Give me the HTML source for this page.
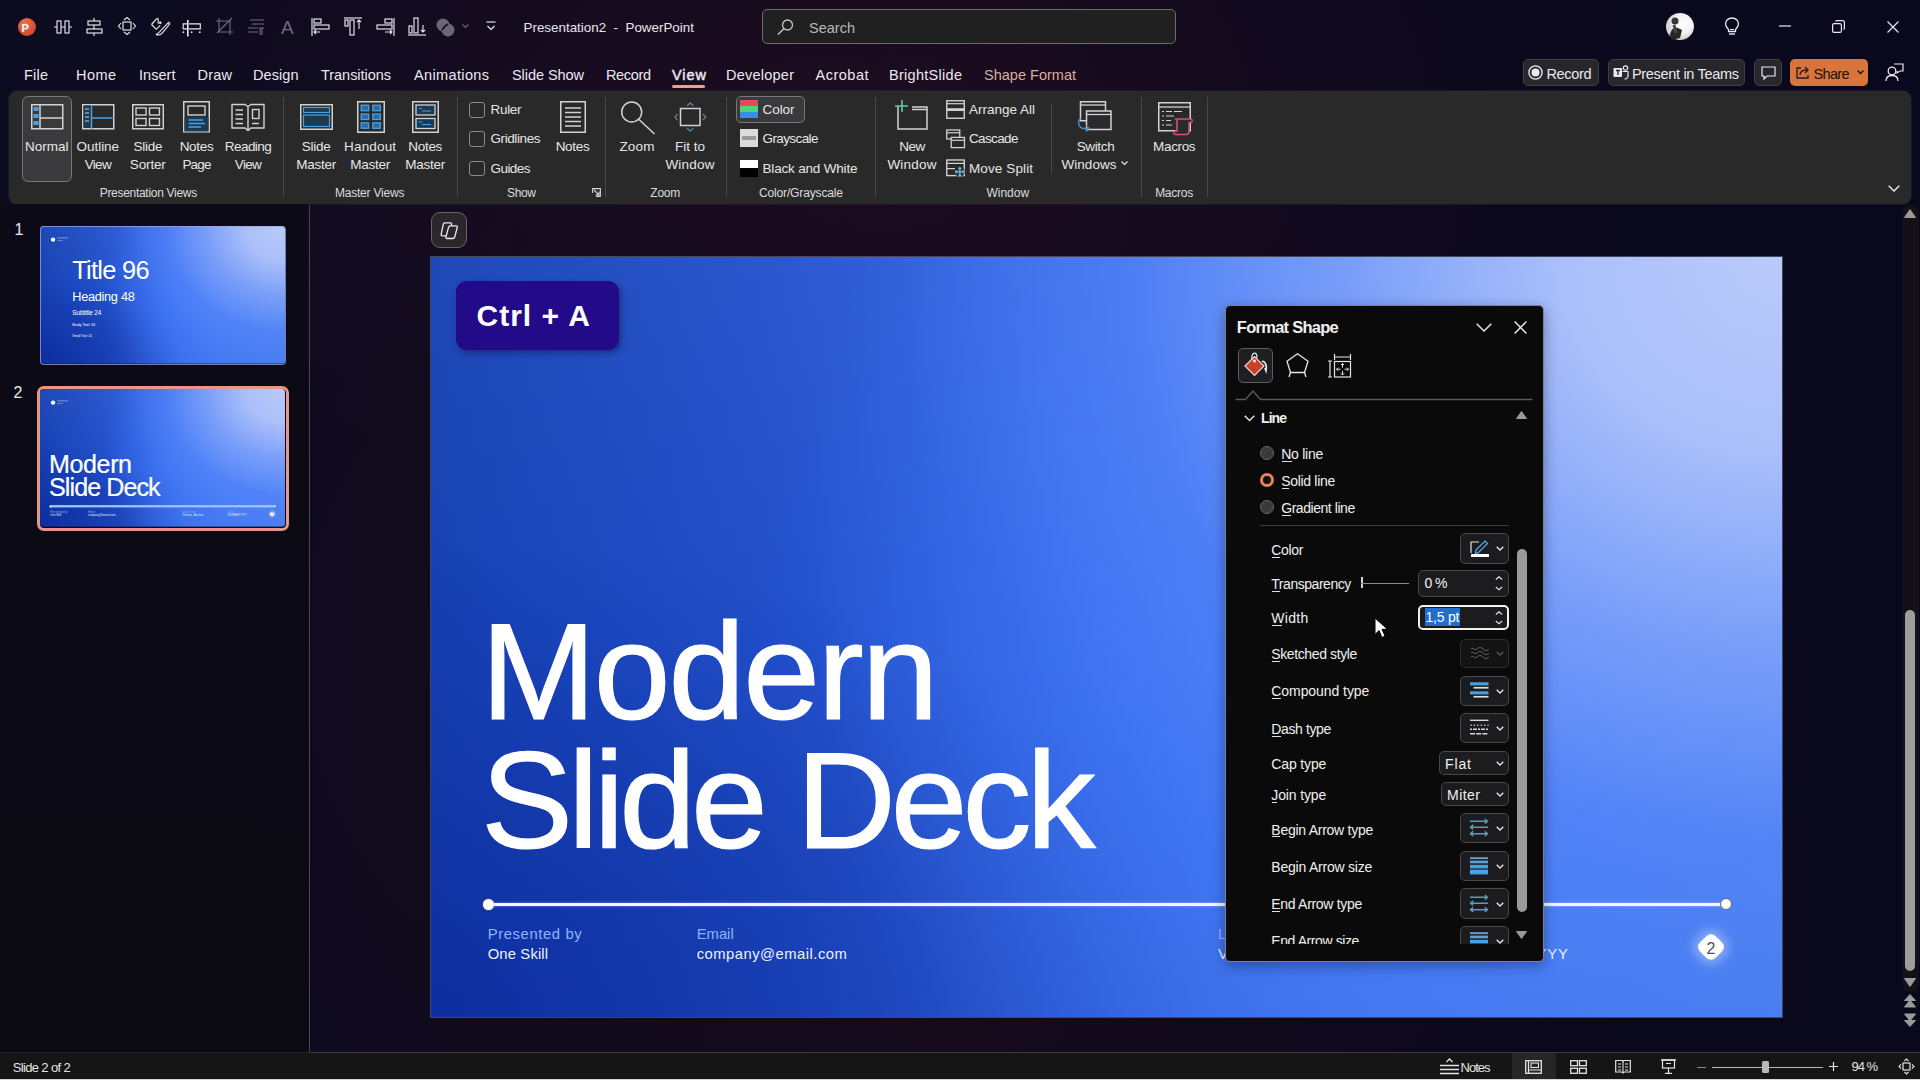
<!DOCTYPE html>
<html><head><meta charset="utf-8">
<style>
html,body{margin:0;padding:0;width:1920px;height:1080px;overflow:hidden;background:#0c0a18;font-family:"Liberation Sans",sans-serif;}
.t{position:absolute;white-space:nowrap;line-height:1;font-family:"Liberation Sans",sans-serif;}
svg{overflow:visible}
</style></head><body>
<div style="position:absolute;left:0;top:0;width:1920px;height:1080px;background:radial-gradient(ellipse 700px 420px at 820px 120px, rgba(40,14,38,0.45), rgba(40,14,38,0) 100%),radial-gradient(ellipse 900px 700px at 900px 650px, rgba(30,14,30,0.4), rgba(30,14,30,0) 100%),linear-gradient(90deg,#0c0b20 0%,#0f0a1c 30%,#120a1a 50%,#0c081c 70%,#09081c 100%);"></div><div style="position:absolute;left:18px;top:18px;width:18px;height:18px;border-radius:50%;background:radial-gradient(circle at 35% 30%,#f07050,#c83a20);"></div><div class="t" style="left:21.50px;top:22.69px;font-size:11px;color:#fff;font-weight:700;">P</div><svg style="position:absolute;left:54px;top:17px;" width="20" height="20" viewBox="0 0 20 20" fill="none"><rect x="3" y="4" width="4" height="12" stroke="#ece8f0" stroke-width="1.15"/><rect x="11" y="4" width="4" height="12" stroke="#ece8f0" stroke-width="1.15"/><path d="M0 10H3M7 10H11M15 10H18" stroke="#ece8f0" stroke-width="1.15"/></svg><svg style="position:absolute;left:86px;top:17px;" width="20" height="20" viewBox="0 0 20 20" fill="none"><rect x="2" y="4" width="12" height="4" stroke="#ece8f0" stroke-width="1.15"/><rect x="1" y="12" width="15" height="4" stroke="#ece8f0" stroke-width="1.15"/><path d="M8 1V4M8 8V12M8 16V19" stroke="#ece8f0" stroke-width="1.15"/></svg><svg style="position:absolute;left:118px;top:17px;" width="20" height="20" viewBox="0 0 20 20" fill="none"><rect x="5" y="5" width="8" height="8" stroke="#ece8f0" stroke-width="1.15"/><path d="M6 3L9 0.5L12 3M6 15L9 17.5L12 15M3 6L0.5 9L3 12M15 6L17.5 9L15 12" stroke="#ece8f0" stroke-width="1.1"/></svg><svg style="position:absolute;left:150px;top:17px;" width="20" height="20" viewBox="0 0 20 20" fill="none"><path d="M1.5 7.5L6.5 1.8C7.2 1.1 8.2 1.6 8.2 2.6V6.8M1.5 7.5L6.3 12.3L10.3 8.3" stroke="#ece8f0" stroke-width="1.15"/><circle cx="10.3" cy="5.8" r="1.3" fill="#ece8f0"/><path d="M18.8 5.2L10.3 14.2C9.4 15.1 8.2 16.6 6.2 17.6C8.6 18.3 11.2 17.4 12.4 15.8L19.8 6.9Z" stroke="#ece8f0" stroke-width="1.1" stroke-linejoin="round"/></svg><svg style="position:absolute;left:181px;top:17px;" width="20" height="20" viewBox="0 0 20 20" fill="none"><path d="M6.8 3V19.5" stroke="#ece8f0" stroke-width="1.6"/><path d="M6 6.8H2.2V11.8H6M8 6.8H19.3V11.8H8" stroke="#ece8f0" stroke-width="1.15"/><circle cx="2.4" cy="15.2" r="0.9" fill="#ece8f0"/><circle cx="10.6" cy="15.2" r="0.9" fill="#ece8f0"/><circle cx="18.8" cy="15.2" r="0.9" fill="#ece8f0"/></svg><svg style="position:absolute;left:215px;top:17px;" width="20" height="20" viewBox="0 0 20 20" fill="none"><path d="M4 1V15H18M1 4H15V18M2 16L17 1" stroke="#6f6b7a" stroke-width="1.15"/></svg><svg style="position:absolute;left:246px;top:17px;" width="20" height="20" viewBox="0 0 20 20" fill="none"><path d="M4 3H18M6 7H18M2 11H12M2 15H12M14 11V18M16 11V18M13 11H18" stroke="#6f6b7a" stroke-width="1.15"/></svg><div class="t" style="left:281.00px;top:17.92px;font-size:19px;color:#6f6b7a;">A</div><svg style="position:absolute;left:311px;top:17px;" width="20" height="20" viewBox="0 0 20 20" fill="none"><path d="M1 1V19" stroke="#ece8f0" stroke-width="1.15"/><rect x="3" y="2" width="7" height="4" stroke="#ece8f0" stroke-width="1.15"/><rect x="3" y="8" width="15" height="4" stroke="#ece8f0" stroke-width="1.15"/><path d="M9 15H3M5 13L3 15L5 17" stroke="#ece8f0" stroke-width="1.1"/></svg><svg style="position:absolute;left:344px;top:17px;" width="20" height="20" viewBox="0 0 20 20" fill="none"><path d="M0 1H18" stroke="#ece8f0" stroke-width="1.15"/><rect x="1" y="3" width="3" height="6" stroke="#ece8f0" stroke-width="1.15"/><rect x="6" y="3" width="4" height="15" stroke="#ece8f0" stroke-width="1.15"/><path d="M15 12V3M13 5L15 3L17 5" stroke="#ece8f0" stroke-width="1.1"/></svg><svg style="position:absolute;left:376px;top:17px;" width="20" height="20" viewBox="0 0 20 20" fill="none"><path d="M18 1V19" stroke="#ece8f0" stroke-width="1.15"/><rect x="9" y="2" width="7" height="4" stroke="#ece8f0" stroke-width="1.15"/><rect x="1" y="8" width="15" height="4" stroke="#ece8f0" stroke-width="1.15"/><path d="M9 15H16M14 13L16 15L14 17" stroke="#ece8f0" stroke-width="1.1"/></svg><svg style="position:absolute;left:408px;top:17px;" width="20" height="20" viewBox="0 0 20 20" fill="none"><path d="M0 18H18" stroke="#ece8f0" stroke-width="1.15"/><rect x="1" y="9" width="3" height="7" stroke="#ece8f0" stroke-width="1.15"/><rect x="6" y="1" width="4" height="15" stroke="#ece8f0" stroke-width="1.15"/><path d="M15 8V15M13 13L15 15L17 13" stroke="#ece8f0" stroke-width="1.1"/></svg><svg style="position:absolute;left:436px;top:18px;" width="19" height="19" viewBox="0 0 19 19" fill="none"><circle cx="7" cy="7" r="6.5" fill="#6a6674"/><circle cx="12" cy="12" r="6.5" fill="#6a6674"/><path d="M6 12C8 9 10 7 12 6" stroke="#0e0b1c" stroke-width="1.5"/></svg><svg style="position:absolute;left:462px;top:24px;" width="7" height="5" viewBox="0 0 7 5" fill="none"><path d="M0.5 0.5L3.5 3.5L6.5 0.5" stroke="#6a6674" stroke-width="1.1"/></svg><svg style="position:absolute;left:486px;top:21px;" width="10" height="11" viewBox="0 0 10 11" fill="none"><path d="M0.5 1H9.5" stroke="#ece8f0" stroke-width="1.15"/><path d="M1.5 5L5 8.5L8.5 5" stroke="#ece8f0" stroke-width="1.15"/></svg><div class="t" style="left:523.50px;top:21.16px;font-size:13.4px;color:#e9e5ee;">Presentation2&nbsp;&nbsp;-&nbsp;&nbsp;PowerPoint</div><div style="position:absolute;left:762px;top:9px;width:414px;height:35px;border:1px solid #6b6b70;border-radius:5px;background:#202020;box-sizing:border-box;"></div><svg style="position:absolute;left:777px;top:19px;" width="17" height="17" viewBox="0 0 17 17" fill="none"><circle cx="10.5" cy="6" r="5" stroke="#c8c5cc" stroke-width="1.3"/><path d="M7 9.5L1 15.5" stroke="#c8c5cc" stroke-width="1.4"/></svg><div class="t" style="left:809.00px;top:20.73px;font-size:14.5px;color:#b9b6bd;">Search</div><div style="position:absolute;left:1666px;top:13px;width:28px;height:27px;border-radius:50%;background:radial-gradient(circle at 60% 40%,#ffffff 0%,#f4f2f4 40%,#d8d6d8 60%);overflow:hidden"></div><svg style="position:absolute;left:1666px;top:13px;" width="28" height="27" viewBox="0 0 28 27" fill="none"><path d="M4 22C5 16 8 14 12 15L16 17L14 25L6 27Z" fill="#2a2628"/><circle cx="9" cy="8" r="3.5" fill="#3a3436"/><path d="M8 12L10 20" stroke="#444" stroke-width="3"/></svg><svg style="position:absolute;left:1724px;top:17px;" width="16" height="20" viewBox="0 0 16 20" fill="none"><path d="M8 1C4 1 1.5 3.8 1.5 7C1.5 9.5 3 11 4.5 12.5V14.5H11.5V12.5C13 11 14.5 9.5 14.5 7C14.5 3.8 12 1 8 1Z" stroke="#ece8f0" stroke-width="1.3"/><path d="M5 17H11" stroke="#ece8f0" stroke-width="1.4"/><path d="M6 12.5H10" stroke="#ece8f0" stroke-width="1"/></svg><svg style="position:absolute;left:1779px;top:25px;" width="12" height="2" viewBox="0 0 12 2" fill="none"><path d="M0 1H12" stroke="#ece8f0" stroke-width="1.2"/></svg><svg style="position:absolute;left:1832px;top:20px;" width="13" height="13" viewBox="0 0 13 13" fill="none"><rect x="0.6" y="3.6" width="8.8" height="8.8" rx="1.5" stroke="#ece8f0" stroke-width="1.2"/><path d="M3.5 1.6C3.8 0.9 4.4 0.6 5 0.6H10.5C11.6 0.6 12.4 1.4 12.4 2.5V8C12.4 8.6 12.1 9.2 11.4 9.5" stroke="#ece8f0" stroke-width="1.2"/></svg><svg style="position:absolute;left:1887px;top:21px;" width="12" height="12" viewBox="0 0 12 12" fill="none"><path d="M0.5 0.5L11.5 11.5M11.5 0.5L0.5 11.5" stroke="#ece8f0" stroke-width="1.2"/></svg><div class="t" style="left:24.00px;top:67.73px;font-size:14.5px;color:#ece8f0;letter-spacing:0.212px;">File</div><div class="t" style="left:76.00px;top:67.73px;font-size:14.5px;color:#ece8f0;letter-spacing:0.441px;">Home</div><div class="t" style="left:139.00px;top:67.73px;font-size:14.5px;color:#ece8f0;letter-spacing:0.048px;">Insert</div><div class="t" style="left:197.50px;top:67.73px;font-size:14.5px;color:#ece8f0;letter-spacing:0.222px;">Draw</div><div class="t" style="left:253.00px;top:67.73px;font-size:14.5px;color:#ece8f0;letter-spacing:0.073px;">Design</div><div class="t" style="left:321.00px;top:67.73px;font-size:14.5px;color:#ece8f0;letter-spacing:-0.037px;">Transitions</div><div class="t" style="left:414.00px;top:67.73px;font-size:14.5px;color:#ece8f0;letter-spacing:0.364px;">Animations</div><div class="t" style="left:512.00px;top:67.73px;font-size:14.5px;color:#ece8f0;letter-spacing:-0.06px;">Slide Show</div><div class="t" style="left:606.00px;top:67.73px;font-size:14.5px;color:#ece8f0;letter-spacing:-0.348px;">Record</div><div class="t" style="left:672.00px;top:67.73px;font-size:14.5px;color:#ece8f0;letter-spacing:0.945px;-webkit-text-stroke:0.45px #ece8f0;">View</div><div class="t" style="left:726.00px;top:67.73px;font-size:14.5px;color:#ece8f0;letter-spacing:0.239px;">Developer</div><div class="t" style="left:815.50px;top:67.73px;font-size:14.5px;color:#ece8f0;letter-spacing:0.505px;">Acrobat</div><div class="t" style="left:889.00px;top:67.73px;font-size:14.5px;color:#ece8f0;letter-spacing:0.288px;">BrightSlide</div><div class="t" style="left:984.00px;top:67.73px;font-size:14.5px;color:#d8ada2;letter-spacing:0.012px;">Shape Format</div><div style="position:absolute;left:672px;top:85px;width:33px;height:3px;background:#e5a48e;border-radius:2px;"></div><div style="position:absolute;left:1523px;top:59px;width:76px;height:27px;background:#27262b;border:1px solid #3e3d44;border-radius:5px;box-sizing:border-box;"></div><svg style="position:absolute;left:1528px;top:65px;" width="15" height="15" viewBox="0 0 15 15" fill="none"><circle cx="7.5" cy="7.5" r="6.6" stroke="#ece8f0" stroke-width="1.3"/><circle cx="7.5" cy="7.5" r="4" fill="#ece8f0"/></svg><div class="t" style="left:1546.50px;top:66.73px;font-size:14.5px;color:#ece8f0;letter-spacing:-0.348px;">Record</div><div style="position:absolute;left:1608px;top:59px;width:137px;height:27px;background:#27262b;border:1px solid #3e3d44;border-radius:5px;box-sizing:border-box;"></div><svg style="position:absolute;left:1613px;top:65px;" width="16" height="15" viewBox="0 0 16 15" fill="none"><rect x="0.5" y="3" width="8.5" height="9" rx="1" fill="#ece8f0"/><path d="M3 5.5H7M5 5.5V10" stroke="#27262b" stroke-width="1.3"/><circle cx="12.5" cy="3" r="2.2" stroke="#ece8f0" stroke-width="1.2"/><path d="M9.5 6.5H15V11C15 13 13 14 11.5 14" stroke="#ece8f0" stroke-width="1.2"/></svg><div class="t" style="left:1632.00px;top:66.73px;font-size:14.5px;color:#ece8f0;letter-spacing:-0.317px;">Present in Teams</div><div style="position:absolute;left:1754px;top:59px;width:28px;height:27px;background:#27262b;border:1px solid #3e3d44;border-radius:5px;box-sizing:border-box;"></div><svg style="position:absolute;left:1761px;top:66px;" width="15" height="14" viewBox="0 0 15 14" fill="none"><path d="M1 1H14V10H6L3 13V10H1Z" stroke="#ece8f0" stroke-width="1.2"/></svg><div style="position:absolute;left:1790px;top:59px;width:78px;height:27px;background:#d8743c;border-radius:5px;"></div><svg style="position:absolute;left:1795px;top:65px;" width="15" height="15" viewBox="0 0 15 15" fill="none"><path d="M6 3H2V13H13V10" stroke="#2a1a14" stroke-width="1.3"/><path d="M5 10C5 6 8 5 12 5M10 2L13 5L10 8" stroke="#2a1a14" stroke-width="1.3"/></svg><div class="t" style="left:1813.50px;top:66.73px;font-size:14.5px;color:#1c120e;letter-spacing:-0.673px;">Share</div><svg style="position:absolute;left:1857px;top:70px;" width="7" height="5" viewBox="0 0 7 5" fill="none"><path d="M0.5 0.5L3.5 3.5L6.5 0.5" stroke="#1c120e" stroke-width="1.3"/></svg><svg style="position:absolute;left:1885px;top:63px;" width="19" height="19" viewBox="0 0 19 19" fill="none"><circle cx="7" cy="8" r="3.8" stroke="#ece8f0" stroke-width="1.3"/><path d="M1 18C1 14 3.5 12.5 7 12.5C10.5 12.5 13 14 13 18" stroke="#ece8f0" stroke-width="1.3"/><path d="M9 1H18V8H15L12 10V8" stroke="#ece8f0" stroke-width="1.2"/></svg><div style="position:absolute;left:9px;top:91px;width:1902px;height:113px;background:#292929;border-radius:8px;box-shadow:0 0 0 1px rgba(60,60,70,0.25);"></div><div style="position:absolute;left:283px;top:97px;width:1px;height:100px;background:#474747;"></div><div style="position:absolute;left:457px;top:97px;width:1px;height:100px;background:#474747;"></div><div style="position:absolute;left:605px;top:97px;width:1px;height:100px;background:#474747;"></div><div style="position:absolute;left:726px;top:97px;width:1px;height:100px;background:#474747;"></div><div style="position:absolute;left:875px;top:97px;width:1px;height:100px;background:#474747;"></div><div style="position:absolute;left:1141px;top:97px;width:1px;height:100px;background:#474747;"></div><div style="position:absolute;left:1207px;top:97px;width:1px;height:100px;background:#474747;"></div><div style="position:absolute;left:1051px;top:104px;width:1px;height:70px;background:#474747;"></div><div class="t" style="left:148.30px;top:186.84px;font-size:12px;color:#dcdcdc;letter-spacing:-0.294px;transform:translateX(-50%);">Presentation Views</div><div class="t" style="left:369.60px;top:186.84px;font-size:12px;color:#dcdcdc;letter-spacing:-0.209px;transform:translateX(-50%);">Master Views</div><div class="t" style="left:521.30px;top:186.84px;font-size:12px;color:#dcdcdc;letter-spacing:-0.339px;transform:translateX(-50%);">Show</div><div class="t" style="left:665.20px;top:186.84px;font-size:12px;color:#dcdcdc;letter-spacing:-0.224px;transform:translateX(-50%);">Zoom</div><div class="t" style="left:800.90px;top:186.84px;font-size:12px;color:#dcdcdc;letter-spacing:-0.145px;transform:translateX(-50%);">Color/Grayscale</div><div class="t" style="left:1007.80px;top:186.84px;font-size:12px;color:#dcdcdc;letter-spacing:-0.036px;transform:translateX(-50%);">Window</div><div class="t" style="left:1174.00px;top:186.84px;font-size:12px;color:#dcdcdc;letter-spacing:-0.267px;transform:translateX(-50%);">Macros</div><div style="position:absolute;left:22px;top:96px;width:50px;height:86px;background:#3a3a3c;border:1px solid #77767a;border-radius:6px;box-sizing:border-box;"></div><div class="t" style="left:46.80px;top:139.57px;font-size:13.5px;color:#e6e6e6;letter-spacing:-0.001px;transform:translateX(-50%);">Normal</div><div class="t" style="left:97.80px;top:139.57px;font-size:13.5px;color:#e6e6e6;letter-spacing:-0.045px;transform:translateX(-50%);">Outline</div><div class="t" style="left:97.80px;top:157.87px;font-size:13.5px;color:#e6e6e6;letter-spacing:-0.672px;transform:translateX(-50%);">View</div><div class="t" style="left:147.80px;top:139.57px;font-size:13.5px;color:#e6e6e6;letter-spacing:-0.255px;transform:translateX(-50%);">Slide</div><div class="t" style="left:147.80px;top:157.87px;font-size:13.5px;color:#e6e6e6;letter-spacing:-0.152px;transform:translateX(-50%);">Sorter</div><div class="t" style="left:196.50px;top:139.57px;font-size:13.5px;color:#e6e6e6;letter-spacing:-0.316px;transform:translateX(-50%);">Notes</div><div class="t" style="left:196.50px;top:157.87px;font-size:13.5px;color:#e6e6e6;letter-spacing:-0.842px;transform:translateX(-50%);">Page</div><div class="t" style="left:248.00px;top:139.57px;font-size:13.5px;color:#e6e6e6;letter-spacing:-0.548px;transform:translateX(-50%);">Reading</div><div class="t" style="left:248.00px;top:157.87px;font-size:13.5px;color:#e6e6e6;letter-spacing:-0.672px;transform:translateX(-50%);">View</div><div class="t" style="left:316.20px;top:139.57px;font-size:13.5px;color:#e6e6e6;letter-spacing:-0.255px;transform:translateX(-50%);">Slide</div><div class="t" style="left:316.20px;top:157.87px;font-size:13.5px;color:#e6e6e6;letter-spacing:-0.251px;transform:translateX(-50%);">Master</div><div class="t" style="left:370.20px;top:139.57px;font-size:13.5px;color:#e6e6e6;letter-spacing:0.161px;transform:translateX(-50%);">Handout</div><div class="t" style="left:370.20px;top:157.87px;font-size:13.5px;color:#e6e6e6;letter-spacing:-0.251px;transform:translateX(-50%);">Master</div><div class="t" style="left:425.20px;top:139.57px;font-size:13.5px;color:#e6e6e6;letter-spacing:-0.316px;transform:translateX(-50%);">Notes</div><div class="t" style="left:425.20px;top:157.87px;font-size:13.5px;color:#e6e6e6;letter-spacing:-0.251px;transform:translateX(-50%);">Master</div><div class="t" style="left:572.50px;top:139.57px;font-size:13.5px;color:#e6e6e6;letter-spacing:-0.316px;transform:translateX(-50%);">Notes</div><div class="t" style="left:637.00px;top:139.57px;font-size:13.5px;color:#e6e6e6;letter-spacing:0.165px;transform:translateX(-50%);">Zoom</div><div class="t" style="left:690.00px;top:139.57px;font-size:13.5px;color:#e6e6e6;letter-spacing:-0.001px;transform:translateX(-50%);">Fit to</div><div class="t" style="left:690.00px;top:157.87px;font-size:13.5px;color:#e6e6e6;letter-spacing:0.197px;transform:translateX(-50%);">Window</div><div class="t" style="left:912.00px;top:139.57px;font-size:13.5px;color:#e6e6e6;letter-spacing:-0.503px;transform:translateX(-50%);">New</div><div class="t" style="left:912.00px;top:157.87px;font-size:13.5px;color:#e6e6e6;letter-spacing:0.197px;transform:translateX(-50%);">Window</div><div class="t" style="left:1095.50px;top:139.57px;font-size:13.5px;color:#e6e6e6;letter-spacing:-0.352px;transform:translateX(-50%);">Switch</div><div class="t" style="left:1089.00px;top:157.87px;font-size:13.5px;color:#e6e6e6;letter-spacing:0.039px;transform:translateX(-50%);">Windows</div><svg style="position:absolute;left:1121px;top:161px;" width="7" height="5" viewBox="0 0 7 5" fill="none"><path d="M0.5 0.5L3.5 3.5L6.5 0.5" stroke="#e6e6e6" stroke-width="1.2"/></svg><div class="t" style="left:1174.20px;top:139.57px;font-size:13.5px;color:#e6e6e6;letter-spacing:-0.351px;transform:translateX(-50%);">Macros</div><div style="position:absolute;left:469px;top:102.0px;width:15.5px;height:15.5px;border:1.2px solid #8a8a8c;border-radius:3px;box-sizing:border-box;"></div><div class="t" style="left:490.50px;top:103.37px;font-size:13.5px;color:#e6e6e6;letter-spacing:-0.315px;">Ruler</div><div style="position:absolute;left:469px;top:131.3px;width:15.5px;height:15.5px;border:1.2px solid #8a8a8c;border-radius:3px;box-sizing:border-box;"></div><div class="t" style="left:490.50px;top:132.47px;font-size:13.5px;color:#e6e6e6;letter-spacing:-0.408px;">Gridlines</div><div style="position:absolute;left:469px;top:160.6px;width:15.5px;height:15.5px;border:1.2px solid #8a8a8c;border-radius:3px;box-sizing:border-box;"></div><div class="t" style="left:490.50px;top:161.57px;font-size:13.5px;color:#e6e6e6;letter-spacing:-0.554px;">Guides</div><div style="position:absolute;left:736px;top:96px;width:69px;height:27px;background:#3a3a3c;border:1px solid #77767a;border-radius:5px;box-sizing:border-box;"></div><div class="t" style="left:762.50px;top:103.27px;font-size:13.5px;color:#e6e6e6;letter-spacing:-0.065px;">Color</div><div class="t" style="left:762.50px;top:131.97px;font-size:13.5px;color:#e6e6e6;letter-spacing:-0.596px;">Grayscale</div><div class="t" style="left:762.50px;top:161.57px;font-size:13.5px;color:#e6e6e6;letter-spacing:-0.182px;">Black and White</div><div class="t" style="left:969.00px;top:103.37px;font-size:13.5px;color:#e6e6e6;letter-spacing:-0.003px;">Arrange All</div><div class="t" style="left:969.00px;top:131.97px;font-size:13.5px;color:#e6e6e6;letter-spacing:-0.63px;">Cascade</div><div class="t" style="left:969.00px;top:161.57px;font-size:13.5px;color:#e6e6e6;letter-spacing:0.109px;">Move Split</div><svg style="position:absolute;left:31px;top:104px;" width="33" height="26" viewBox="0 0 33 26" fill="none"><rect x="0.75" y="0.75" width="31" height="24" stroke="#d2d2d2" stroke-width="1.5"/><path d="M9 1V25M9 14H32" stroke="#d2d2d2" stroke-width="1.5"/><rect x="2.5" y="3" width="5" height="4" fill="#4aa0e0"/><rect x="2.5" y="10" width="5" height="4" fill="#4aa0e0"/><rect x="2.5" y="17" width="5" height="4" fill="#4aa0e0"/></svg><svg style="position:absolute;left:82px;top:104px;" width="33" height="26" viewBox="0 0 33 26" fill="none"><rect x="0.75" y="0.75" width="31" height="24" stroke="#d2d2d2" stroke-width="1.5"/><rect x="1.5" y="1.5" width="8" height="22.5" fill="#1d3a55"/><path d="M9.5 1V25M9.5 14H32" stroke="#4aa0e0" stroke-width="1.5"/><path d="M3 5H7M3 9H7M3 13H7M3 17H7" stroke="#d2d2d2" stroke-width="1.2"/></svg><svg style="position:absolute;left:132px;top:104px;" width="32" height="26" viewBox="0 0 32 26" fill="none"><rect x="0.75" y="0.75" width="30.5" height="24" stroke="#d2d2d2" stroke-width="1.5"/><rect x="4" y="4" width="10" height="7" stroke="#d2d2d2" stroke-width="1.4"/><rect x="17.5" y="4" width="10" height="7" stroke="#d2d2d2" stroke-width="1.4"/><rect x="4" y="14.5" width="10" height="7" stroke="#d2d2d2" stroke-width="1.4"/><rect x="17.5" y="14.5" width="10" height="7" stroke="#d2d2d2" stroke-width="1.4"/></svg><svg style="position:absolute;left:183px;top:101px;" width="27" height="32" viewBox="0 0 27 32" fill="none"><rect x="0.75" y="0.75" width="25.5" height="30" stroke="#d2d2d2" stroke-width="1.5"/><rect x="1.5" y="16" width="24" height="14.5" fill="#1d3a55"/><rect x="5" y="5" width="17" height="9" stroke="#d2d2d2" stroke-width="1.4"/><path d="M5.5 19H20M5.5 22.5H22M5.5 26H18" stroke="#4aa0e0" stroke-width="1.3"/></svg><svg style="position:absolute;left:231px;top:103px;" width="34" height="29" viewBox="0 0 34 29" fill="none"><path d="M1 1.5H14L17 3.5L20 1.5H33V25H20L17 27.5L14 25H1Z" stroke="#d2d2d2" stroke-width="1.4"/><path d="M17 3.5V27" stroke="#d2d2d2" stroke-width="1.4"/><path d="M4.5 7H12M4.5 11.5H12M4.5 16H12M4.5 20.5H12M21 20.5H28" stroke="#d2d2d2" stroke-width="1.4"/><rect x="21.5" y="6.5" width="6.5" height="9" stroke="#d2d2d2" stroke-width="1.4"/></svg><svg style="position:absolute;left:300px;top:104px;" width="33" height="26" viewBox="0 0 33 26" fill="none"><rect x="0.75" y="0.75" width="31.5" height="24.5" stroke="#d2d2d2" stroke-width="1.5"/><rect x="3.5" y="3.5" width="26" height="5" fill="#1d3a55" stroke="#4aa0e0" stroke-width="1.2"/><rect x="3.5" y="11" width="26" height="11.5" fill="#1d3a55" stroke="#4aa0e0" stroke-width="1.2"/></svg><svg style="position:absolute;left:357px;top:101px;" width="28" height="32" viewBox="0 0 28 32" fill="none"><rect x="0.75" y="0.75" width="26.5" height="30.5" stroke="#d2d2d2" stroke-width="1.5"/><rect x="4.2" y="4.2" width="7.5" height="5.5" fill="#2a6aa8" stroke="#4aa0e0" stroke-width="1.3"/><rect x="4.2" y="13" width="7.5" height="5.5" fill="#2a6aa8" stroke="#4aa0e0" stroke-width="1.3"/><rect x="4.2" y="21.8" width="7.5" height="5.5" fill="#2a6aa8" stroke="#4aa0e0" stroke-width="1.3"/><rect x="15.8" y="4.2" width="7.5" height="5.5" fill="#2a6aa8" stroke="#4aa0e0" stroke-width="1.3"/><rect x="15.8" y="13" width="7.5" height="5.5" fill="#2a6aa8" stroke="#4aa0e0" stroke-width="1.3"/><rect x="15.8" y="21.8" width="7.5" height="5.5" fill="#2a6aa8" stroke="#4aa0e0" stroke-width="1.3"/></svg><svg style="position:absolute;left:412px;top:101px;" width="27" height="32" viewBox="0 0 27 32" fill="none"><rect x="0.75" y="0.75" width="25.5" height="30.5" stroke="#d2d2d2" stroke-width="1.5"/><rect x="4" y="4" width="19" height="10" fill="#1d3a55" stroke="#d2d2d2" stroke-width="1.3"/><rect x="4" y="17.5" width="19" height="10" fill="#1d3a55" stroke="#d2d2d2" stroke-width="1.3"/><path d="M7 7.5H10M10 10H19M7 21H10M10 23.5H19" stroke="#4aa0e0" stroke-width="1"/></svg><svg style="position:absolute;left:560px;top:101px;" width="26" height="32" viewBox="0 0 26 32" fill="none"><rect x="0.75" y="0.75" width="24.5" height="30.5" stroke="#d2d2d2" stroke-width="1.5"/><path d="M5 7H21M5 11.5H21M5 16H21M5 20.5H21M5 25H21" stroke="#d2d2d2" stroke-width="1.3"/></svg><svg style="position:absolute;left:592px;top:188px;" width="9" height="9" viewBox="0 0 9 9" fill="none"><path d="M0.6 5V0.6H8.4V8.4H4M2 2L7 7M7 3.5V7H3.5" stroke="#d2d2d2" stroke-width="1.1"/></svg><svg style="position:absolute;left:621px;top:100px;" width="35" height="35" viewBox="0 0 35 35" fill="none"><circle cx="10.7" cy="12" r="10" stroke="#d2d2d2" stroke-width="1.5"/><path d="M18 19.5L33.5 34" stroke="#d2d2d2" stroke-width="1.6"/></svg><svg style="position:absolute;left:674px;top:102px;" width="33" height="30" viewBox="0 0 33 30" fill="none"><rect x="6.5" y="6.5" width="19.5" height="17" stroke="#d2d2d2" stroke-width="1.5"/><path d="M13 4L16.2 1L19.5 4M13 26L16.2 29L19.5 26M3.5 12L0.8 15L3.5 18M29 12L31.7 15L29 18" stroke="#5a7fa0" stroke-width="1.3"/></svg><svg style="position:absolute;left:740px;top:100px;" width="19" height="19" viewBox="0 0 19 19" fill="none"><rect x="0" y="0" width="18" height="6" fill="#e84a5a"/><rect x="0" y="6" width="18" height="6" fill="#52d27a"/><rect x="0" y="12" width="18" height="6" fill="#3c8ee0"/></svg><svg style="position:absolute;left:740px;top:129px;" width="19" height="19" viewBox="0 0 19 19" fill="none"><rect x="0" y="0" width="18" height="18" fill="#dcdcdc"/><rect x="2" y="7" width="14" height="4" fill="#9a9a9a"/></svg><svg style="position:absolute;left:740px;top:160px;" width="19" height="17" viewBox="0 0 19 17" fill="none"><rect x="0" y="0" width="18" height="8" fill="#ffffff"/><rect x="0" y="8" width="18" height="9" fill="#000000"/></svg><svg style="position:absolute;left:894px;top:99px;" width="34" height="31" viewBox="0 0 34 31" fill="none"><path d="M4 7V30H33V8H18" stroke="#d2d2d2" stroke-width="1.5"/><path d="M18 10.5H33" stroke="#d2d2d2" stroke-width="1.5"/><path d="M8 1V13M1 7H14" stroke="#5ad0a0" stroke-width="1.6"/></svg><svg style="position:absolute;left:946px;top:100px;" width="19" height="19" viewBox="0 0 19 19" fill="none"><rect x="0.75" y="0.75" width="17.5" height="17.5" stroke="#d2d2d2" stroke-width="1.4"/><path d="M1 3.7H18" stroke="#d2d2d2" stroke-width="1.2"/><rect x="1" y="8.2" width="17" height="2.8" fill="#d2d2d2"/></svg><svg style="position:absolute;left:946px;top:129px;" width="19" height="19" viewBox="0 0 19 19" fill="none"><rect x="0.75" y="1" width="13" height="9" stroke="#d2d2d2" stroke-width="1.3"/><path d="M1 3.8H13.5" stroke="#d2d2d2" stroke-width="1.2"/><rect x="5.2" y="8.4" width="13.3" height="10.2" fill="#292929" stroke="#d2d2d2" stroke-width="1.3"/><path d="M5.5 11.3H18.5" stroke="#d2d2d2" stroke-width="1.2"/></svg><svg style="position:absolute;left:946px;top:159px;" width="20" height="18" viewBox="0 0 20 18" fill="none"><rect x="0.75" y="1" width="17.5" height="15.6" stroke="#d2d2d2" stroke-width="1.4"/><path d="M1 4.4H18M1 9.7H9" stroke="#d2d2d2" stroke-width="1.2"/><circle cx="13.8" cy="12.8" r="5" fill="#292929"/><path d="M13.8 8.5V17.2M9.5 12.8H18.2M12.3 10L13.8 8.5L15.3 10M12.3 15.7L13.8 17.2L15.3 15.7M11 11.3L9.5 12.8L11 14.3M16.7 11.3L18.2 12.8L16.7 14.3" stroke="#6aaad0" stroke-width="1.5"/></svg><svg style="position:absolute;left:1077px;top:101px;" width="35" height="34" viewBox="0 0 35 34" fill="none"><rect x="3.5" y="0.75" width="25" height="19" stroke="#d2d2d2" stroke-width="1.5"/><path d="M3.5 4H28.5" stroke="#d2d2d2" stroke-width="1.3"/><rect x="9.5" y="10" width="24.5" height="18.5" fill="#2a2a2c" stroke="#d2d2d2" stroke-width="1.5"/><path d="M9.5 13.5H34" stroke="#d2d2d2" stroke-width="1.3"/><path d="M4 17C0 20 1 27 7 27.5H12M9 24.5L12 27.5L9 30.5" stroke="#4a90c8" stroke-width="1.5"/></svg><svg style="position:absolute;left:1158px;top:102px;" width="36" height="33" viewBox="0 0 36 33" fill="none"><rect x="0.75" y="0.75" width="31.5" height="28" stroke="#d2d2d2" stroke-width="1.5"/><path d="M1 5H32" stroke="#d2d2d2" stroke-width="1.3"/><path d="M4 9.5H6M8 9.5H14M16 9.5H24M4 14H6M8 14H16M4 18.5H6M8 18.5H13M4 23H6M8 23H14" stroke="#d2d2d2" stroke-width="1.1"/><path d="M17 17H33C34.5 17 34.5 20.5 33 20.5H31V30C31 32 29.5 32.5 28 32.5H17C15.5 32.5 15.5 29 17 29H19V17.5" fill="#2a2a2c" stroke="#e0506a" stroke-width="1.5"/></svg><svg style="position:absolute;left:1888px;top:185px;" width="12" height="7" viewBox="0 0 12 7" fill="none"><path d="M0.7 0.7L6 6L11.3 0.7" stroke="#ececec" stroke-width="1.4"/></svg><div style="position:absolute;left:0px;top:204px;width:310px;height:849px;background:linear-gradient(180deg,#0c0a16 0%,#0b0912 100%);"></div><div style="position:absolute;left:309px;top:205px;width:1px;height:848px;background:#4a4550;"></div><div style="position:absolute;left:310px;top:1052px;width:1610px;height:1px;background:#3d3a42;"></div><div style="position:absolute;left:1902px;top:205px;width:17px;height:787px;background:#131117;border-radius:8px;"></div><svg style="position:absolute;left:1904px;top:209px;" width="12" height="9" viewBox="0 0 12 9" fill="none"><path d="M6 0.5L11.5 8.5H0.5Z" fill="#9a9a9a" stroke="#9a9a9a" stroke-linejoin="round"/></svg><div style="position:absolute;left:1905px;top:610px;width:10px;height:361px;background:#9d9d9d;border-radius:5px;"></div><svg style="position:absolute;left:1904px;top:978px;" width="12" height="9" viewBox="0 0 12 9" fill="none"><path d="M6 8.5L11.5 0.5H0.5Z" fill="#9a9a9a" stroke="#9a9a9a" stroke-linejoin="round"/></svg><svg style="position:absolute;left:1904px;top:994px;" width="12" height="14" viewBox="0 0 12 14" fill="none"><path d="M6 0.5L11.5 6.5H0.5ZM6 6L11.5 13H0.5Z" fill="#9a9a9a" stroke="#9a9a9a" stroke-linejoin="round"/></svg><svg style="position:absolute;left:1904px;top:1013px;" width="12" height="14" viewBox="0 0 12 14" fill="none"><path d="M6 13.5L11.5 7.5H0.5ZM6 8L11.5 1H0.5Z" fill="#9a9a9a" stroke="#9a9a9a" stroke-linejoin="round"/></svg><div class="t" style="left:14.50px;top:222.46px;font-size:16px;color:#e8e8ec;">1</div><div class="t" style="left:13.50px;top:384.96px;font-size:16px;color:#e8e8ec;">2</div><div style="position:absolute;left:40.3px;top:226px;width:1351px;height:760px;transform-origin:0 0;transform:scale(0.18134);background:radial-gradient(ellipse 880px 780px at 1351px 0px, rgba(186,202,250,1) 0%, rgba(178,196,250,0.92) 25%, rgba(140,170,248,0.7) 50%, rgba(100,140,245,0.3) 75%, rgba(90,130,240,0) 100%),radial-gradient(ellipse 620px 850px at 1000px 300px, rgba(74,130,255,0.8) 0%, rgba(74,130,255,0.35) 60%, rgba(74,130,255,0) 100%),radial-gradient(ellipse 800px 480px at 0px 760px, rgba(10,40,155,0.7) 0%, rgba(10,40,155,0) 100%),linear-gradient(180deg, rgba(255,255,255,0.04) 0%, rgba(0,0,0,0) 50%, rgba(0,0,30,0.06) 100%),linear-gradient(90deg,#1641b3 0%,#2250cb 25%,#3468ea 50%,#467bf6 75%,#4e84f8 100%);border-radius:18px;overflow:hidden;"><div style="position:absolute;left:60px;top:63px;width:24px;height:24px;border-radius:50%;background:#fff"></div><div style="position:absolute;left:95px;top:63px;width:60px;height:5px;background:rgba(255,255,255,0.45)"></div><div style="position:absolute;left:95px;top:78px;width:30px;height:5px;background:rgba(255,255,255,0.35)"></div><div class="t" style="left:178.00px;top:175.99px;font-size:140px;color:#ffffff;letter-spacing:-4px;">Title 96</div><div class="t" style="left:178.00px;top:354.44px;font-size:70px;color:#ffffff;letter-spacing:-1.5px;">Heading 48</div><div class="t" style="left:178.00px;top:460.53px;font-size:36px;color:#ffffff;letter-spacing:-1px;">Subtitle 24</div><div class="t" style="left:178.00px;top:536.38px;font-size:22px;color:#ffffff;">Body Text 16</div><div class="t" style="left:178.00px;top:594.76px;font-size:18px;color:#ffffff;">Small Text 14</div></div><div style="position:absolute;left:40px;top:226px;width:246px;height:139px;border-radius:4px;box-shadow:inset 0 0 0 1px rgba(150,165,230,0.75);"></div><div style="position:absolute;left:37px;top:385.5px;width:252px;height:145px;border:3px solid #e6968a;border-radius:7px;box-sizing:border-box;"></div><div style="position:absolute;left:40.3px;top:389px;width:1351px;height:760px;transform-origin:0 0;transform:scale(0.18134);background:radial-gradient(ellipse 880px 780px at 1351px 0px, rgba(186,202,250,1) 0%, rgba(178,196,250,0.92) 25%, rgba(140,170,248,0.7) 50%, rgba(100,140,245,0.3) 75%, rgba(90,130,240,0) 100%),radial-gradient(ellipse 620px 850px at 1000px 300px, rgba(74,130,255,0.8) 0%, rgba(74,130,255,0.35) 60%, rgba(74,130,255,0) 100%),radial-gradient(ellipse 800px 480px at 0px 760px, rgba(10,40,155,0.7) 0%, rgba(10,40,155,0) 100%),linear-gradient(180deg, rgba(255,255,255,0.04) 0%, rgba(0,0,0,0) 50%, rgba(0,0,30,0.06) 100%),linear-gradient(90deg,#1641b3 0%,#2250cb 25%,#3468ea 50%,#467bf6 75%,#4e84f8 100%);border-radius:18px;overflow:hidden;"><div style="position:absolute;left:60px;top:63px;width:24px;height:24px;border-radius:50%;background:#fff"></div><div style="position:absolute;left:95px;top:63px;width:60px;height:5px;background:rgba(255,255,255,0.45)"></div><div style="position:absolute;left:95px;top:78px;width:30px;height:5px;background:rgba(255,255,255,0.35)"></div><div class="t" style="left:50.00px;top:344.88px;font-size:138px;color:#ffffff;letter-spacing:-2.1px;-webkit-text-stroke:1.2px #fff;">Modern</div><div class="t" style="left:50.00px;top:474.48px;font-size:138px;color:#ffffff;letter-spacing:-5.0px;-webkit-text-stroke:1.2px #fff;">Slide Deck</div><div style="position:absolute;left:56.5px;top:640px;width:1238px;height:13px;background:#9cc0ff;"></div><div style="position:absolute;left:51.5px;top:641.7px;width:11px;height:11px;border-radius:50%;background:#fff;box-shadow:0 0 2px #888"></div><div style="position:absolute;left:1288.5px;top:641px;width:10px;height:10px;border-radius:50%;background:#fff;border:1.6px solid #606878"></div><div class="t" style="left:56.70px;top:670.47px;font-size:14.8px;color:#8fb4ff;letter-spacing:0.62px;">Presented by</div><div class="t" style="left:56.70px;top:690.27px;font-size:14.8px;color:#eef3ff;letter-spacing:0.15px;">One Skill</div><div class="t" style="left:265.70px;top:670.47px;font-size:14.8px;color:#8fb4ff;">Email</div><div class="t" style="left:265.70px;top:690.27px;font-size:14.8px;color:#eef3ff;letter-spacing:0.48px;">company@email.com</div><div class="t" style="left:787.00px;top:670.47px;font-size:14.8px;color:#8fb4ff;letter-spacing:1.1px;">Location</div><div class="t" style="left:787.00px;top:690.27px;font-size:14.8px;color:#eef3ff;letter-spacing:0.9px;">Vienna, Austria</div><div class="t" style="left:1035.00px;top:670.47px;font-size:14.8px;color:#8fb4ff;letter-spacing:1.1px;">Date</div><div class="t" style="left:1035.00px;top:690.27px;font-size:14.8px;color:#eef3ff;letter-spacing:0.9px;">DD/MM/YYYY</div><div style="position:absolute;left:1266px;top:675.5px;width:28px;height:28px;transform:rotate(45deg) scale(0.78);border-radius:8px;background:#fff;box-shadow:0 0 14px 6px rgba(255,255,255,0.35)"></div><div class="t" style="left:1280.00px;top:684.46px;font-size:16px;color:#4a5060;transform:translateX(-50%);">2</div></div><div style="position:absolute;left:431px;top:212px;width:36px;height:36px;background:#2a2629;border:1.3px solid #67626c;border-radius:9px;box-sizing:border-box;"></div><svg style="position:absolute;left:438px;top:220px;" width="24" height="22" viewBox="0 0 24 22" fill="none"><path d="M6.5 2.8H12.3Q14 2.8 13.5 4.5L10.6 14.2Q10.1 15.8 8.5 15.8H4.4Q2.7 15.8 3.2 14.1L5.3 4.2Q5.6 2.8 6.5 2.8Z" stroke="#ececec" stroke-width="1.3"/><path d="M12.3 5.8H18Q19.7 5.8 19.2 7.5L16.8 16.8Q16.3 18.5 14.7 18.5H9.2Q7.5 18.5 8 16.8L10.6 7.2Q11 5.8 12.3 5.8Z" fill="#2a2629" stroke="#ececec" stroke-width="1.3"/></svg><div style="position:absolute;left:431px;top:257px;width:1351px;height:760px;background:radial-gradient(ellipse 880px 780px at 1351px 0px, rgba(186,202,250,1) 0%, rgba(178,196,250,0.92) 25%, rgba(140,170,248,0.7) 50%, rgba(100,140,245,0.3) 75%, rgba(90,130,240,0) 100%),radial-gradient(ellipse 620px 850px at 1000px 300px, rgba(74,130,255,0.8) 0%, rgba(74,130,255,0.35) 60%, rgba(74,130,255,0) 100%),radial-gradient(ellipse 800px 480px at 0px 760px, rgba(10,40,155,0.7) 0%, rgba(10,40,155,0) 100%),linear-gradient(180deg, rgba(255,255,255,0.04) 0%, rgba(0,0,0,0) 50%, rgba(0,0,30,0.06) 100%),linear-gradient(90deg,#1641b3 0%,#2250cb 25%,#3468ea 50%,#467bf6 75%,#4e84f8 100%);box-shadow:0 0 0 1px rgba(120,130,160,0.5);overflow:hidden;"><div class="t" style="left:50.00px;top:344.88px;font-size:138px;color:#ffffff;letter-spacing:-2.1px;-webkit-text-stroke:1.2px #fff;">Modern</div><div class="t" style="left:50.00px;top:474.48px;font-size:138px;color:#ffffff;letter-spacing:-5.0px;-webkit-text-stroke:1.2px #fff;">Slide Deck</div><div style="position:absolute;left:56.5px;top:645.7px;width:1238px;height:3px;background:#f4f6ff;box-shadow:0 0 3px rgba(255,255,255,0.4);"></div><div style="position:absolute;left:51.5px;top:641.7px;width:11px;height:11px;border-radius:50%;background:#fff;box-shadow:0 0 2px #888"></div><div style="position:absolute;left:1288.5px;top:641px;width:10px;height:10px;border-radius:50%;background:#fff;border:1.6px solid #606878"></div><div class="t" style="left:56.70px;top:670.47px;font-size:14.8px;color:#8fb4ff;letter-spacing:0.62px;">Presented by</div><div class="t" style="left:56.70px;top:690.27px;font-size:14.8px;color:#eef3ff;letter-spacing:0.15px;">One Skill</div><div class="t" style="left:265.70px;top:670.47px;font-size:14.8px;color:#8fb4ff;">Email</div><div class="t" style="left:265.70px;top:690.27px;font-size:14.8px;color:#eef3ff;letter-spacing:0.48px;">company@email.com</div><div class="t" style="left:787.00px;top:670.47px;font-size:14.8px;color:#8fb4ff;letter-spacing:1.1px;">Location</div><div class="t" style="left:787.00px;top:690.27px;font-size:14.8px;color:#eef3ff;letter-spacing:0.9px;">Vienna, Austria</div><div class="t" style="left:1035.00px;top:670.47px;font-size:14.8px;color:#8fb4ff;letter-spacing:1.1px;">Date</div><div class="t" style="left:1035.00px;top:690.27px;font-size:14.8px;color:#eef3ff;letter-spacing:0.9px;">DD/MM/YYYY</div><div style="position:absolute;left:1266px;top:675.5px;width:28px;height:28px;transform:rotate(45deg) scale(0.78);border-radius:8px;background:#fff;box-shadow:0 0 14px 6px rgba(255,255,255,0.35)"></div><div class="t" style="left:1280.00px;top:684.46px;font-size:16px;color:#4a5060;transform:translateX(-50%);">2</div><div style="position:absolute;left:25px;top:24px;width:163px;height:69px;background:#220a88;border-radius:11px;box-shadow:2px 3px 6px rgba(10,10,60,0.45);"></div><div class="t" style="left:45.50px;top:44.11px;font-size:30px;color:#ffffff;font-weight:700;letter-spacing:1.0px;">Ctrl + A</div></div><div style="position:absolute;left:1224.5px;top:304.5px;width:319px;height:657px;background:#0a0a0a;border:1px solid #80838f;border-radius:5px;box-sizing:border-box;box-shadow:0 4px 14px rgba(0,0,30,0.35);"></div><div class="t" style="left:1236.80px;top:318.83px;font-size:16.5px;color:#f0f0f0;font-weight:700;letter-spacing:-0.729px;">Format Shape</div><svg style="position:absolute;left:1476px;top:323px;" width="16" height="9" viewBox="0 0 16 9" fill="none"><path d="M0.7 0.7L8 8L15.3 0.7" stroke="#ececec" stroke-width="1.4"/></svg><svg style="position:absolute;left:1514px;top:321px;" width="13" height="13" viewBox="0 0 13 13" fill="none"><path d="M0.6 0.6L12.4 12.4M12.4 0.6L0.6 12.4" stroke="#ececec" stroke-width="1.4"/></svg><div style="position:absolute;left:1238px;top:348px;width:35px;height:35px;background:#1f1f21;border:1px solid #5e5e62;border-radius:5px;box-sizing:border-box;"></div><svg style="position:absolute;left:1243px;top:352px;" width="26" height="27" viewBox="0 0 26 27" fill="none"><path d="M2 14L11.5 4.5L21 14L11.5 23.5Z" fill="#c8402a" stroke="#f0d8d0" stroke-width="1.2"/><path d="M9 7.5C8.5 4 9.5 1.2 11.5 1.2C13 1.2 14 3 14 6" stroke="#f0f0f0" stroke-width="1.2"/><circle cx="11.5" cy="9" r="1.6" fill="#f4dcd4"/><path d="M19 9C22.5 10 24 14 23 19L22 16" stroke="#f0f0f0" stroke-width="1.6"/></svg><svg style="position:absolute;left:1286px;top:353px;" width="23" height="26" viewBox="0 0 23 26" fill="none"><path d="M11.5 0.8L22 8.3L18.5 19.5H4.5L1 8.3Z" stroke="#e6e6e6" stroke-width="1.3"/><path d="M4.5 19.5L3 24M18.5 19.5L20 24" stroke="#e6e6e6" stroke-width="1.3"/></svg><svg style="position:absolute;left:1327px;top:354px;" width="25" height="24" viewBox="0 0 25 24" fill="none"><path d="M7.5 3H23.5M7.5 0V6M23.5 0V6" stroke="#e6e6e6" stroke-width="1.2"/><path d="M1 7H5M3 7V23M1 23H5" stroke="#e6e6e6" stroke-width="1.2"/><rect x="7.5" y="7.5" width="16" height="15.5" stroke="#e6e6e6" stroke-width="1.2"/><path d="M15.5 9.5V13.5M14 11L15.5 9.5L17 11M15.5 21V17M14 19.5L15.5 21L17 19.5M9.5 15.2H13.5M11 13.7L9.5 15.2L11 16.7M21.5 15.2H17.5M20 13.7L21.5 15.2L20 16.7" stroke="#e6e6e6" stroke-width="1"/></svg><svg style="position:absolute;left:1235px;top:389px;" width="298" height="12" viewBox="0 0 298 12" fill="none"><path d="M0.5 10.5H10.5L18 2L25.5 10.5H297.5" stroke="#5a5a5e" stroke-width="1.3"/></svg><svg style="position:absolute;left:1244px;top:415px;" width="11" height="7" viewBox="0 0 11 7" fill="none"><path d="M0.7 0.7L5.5 5.5L10.3 0.7" stroke="#e6e6e6" stroke-width="1.4"/></svg><div class="t" style="left:1261.00px;top:410.95px;font-size:14px;color:#f0f0f0;font-weight:700;letter-spacing:-0.926px;">Line</div><div style="position:absolute;left:1260px;top:445.5px;width:14px;height:14px;border-radius:50%;border:1px solid #6a6a6e;background:#3a3a3c;box-sizing:border-box;"></div><div class="t" style="left:1281.20px;top:446.95px;font-size:14px;color:#f0f0f0;letter-spacing:-0.263px;">No line</div><div style="position:absolute;left:1281.5px;top:460.8px;width:10px;height:1px;background:#e0e0e0;"></div><div style="position:absolute;left:1260px;top:473px;width:14px;height:14px;border-radius:50%;border:3.5px solid #e8845c;background:#101010;box-sizing:border-box;"></div><div class="t" style="left:1281.20px;top:473.85px;font-size:14px;color:#f0f0f0;letter-spacing:-0.312px;">Solid line</div><div style="position:absolute;left:1281.5px;top:487.7px;width:7.5px;height:1px;background:#e0e0e0;"></div><div style="position:absolute;left:1260px;top:500px;width:14px;height:14px;border-radius:50%;border:1px solid #6a6a6e;background:#3a3a3c;box-sizing:border-box;"></div><div class="t" style="left:1281.20px;top:500.85px;font-size:14px;color:#f0f0f0;letter-spacing:-0.448px;">Gradient line</div><div style="position:absolute;left:1281.5px;top:514.7px;width:9px;height:1px;background:#e0e0e0;"></div><div style="position:absolute;left:1260px;top:525px;width:249px;height:1px;background:#3c3c40;"></div><div style="position:absolute;left:1225px;top:405px;width:290px;height:539px;overflow:hidden;"><div class="t" style="left:46.30px;top:137.65px;font-size:14px;color:#f0f0f0;letter-spacing:-0.363px;">Color</div><div style="position:absolute;left:46.5px;top:151.5px;width:8px;height:1px;background:#e0e0e0;"></div><div class="t" style="left:46.30px;top:172.05px;font-size:14px;color:#f0f0f0;letter-spacing:-0.461px;">Transparency</div><div style="position:absolute;left:46.5px;top:185.89999999999998px;width:8px;height:1px;background:#e0e0e0;"></div><div class="t" style="left:46.30px;top:205.85px;font-size:14px;color:#f0f0f0;letter-spacing:0.304px;">Width</div><div style="position:absolute;left:46.5px;top:219.70000000000005px;width:10.5px;height:1px;background:#e0e0e0;"></div><div class="t" style="left:46.30px;top:242.05px;font-size:14px;color:#f0f0f0;letter-spacing:-0.388px;">Sketched style</div><div style="position:absolute;left:46.5px;top:255.89999999999998px;width:8px;height:1px;background:#e0e0e0;"></div><div class="t" style="left:46.30px;top:279.45px;font-size:14px;color:#f0f0f0;letter-spacing:-0.069px;">Compound type</div><div style="position:absolute;left:46.5px;top:293.29999999999995px;width:9px;height:1px;background:#e0e0e0;"></div><div class="t" style="left:46.30px;top:317.05px;font-size:14px;color:#f0f0f0;letter-spacing:-0.379px;">Dash type</div><div style="position:absolute;left:46.5px;top:330.9px;width:9px;height:1px;background:#e0e0e0;"></div><div class="t" style="left:46.30px;top:352.05px;font-size:14px;color:#f0f0f0;letter-spacing:-0.147px;">Cap type</div><div class="t" style="left:46.30px;top:383.15px;font-size:14px;color:#f0f0f0;letter-spacing:-0.129px;">Join type</div><div style="position:absolute;left:46.5px;top:397px;width:5px;height:1px;background:#e0e0e0;"></div><div class="t" style="left:46.30px;top:417.55px;font-size:14px;color:#f0f0f0;letter-spacing:-0.255px;">Begin Arrow type</div><div style="position:absolute;left:46.5px;top:431.4px;width:8px;height:1px;background:#e0e0e0;"></div><div class="t" style="left:46.30px;top:455.35px;font-size:14px;color:#f0f0f0;letter-spacing:-0.218px;">Begin Arrow size</div><div class="t" style="left:46.30px;top:492.45px;font-size:14px;color:#f0f0f0;letter-spacing:-0.303px;">End Arrow type</div><div style="position:absolute;left:46.5px;top:506.29999999999995px;width:8px;height:1px;background:#e0e0e0;"></div><div class="t" style="left:46.30px;top:528.75px;font-size:14px;color:#f0f0f0;letter-spacing:-0.413px;">End Arrow size</div><div style="position:absolute;left:46.5px;top:542.6px;width:8px;height:1px;background:#e0e0e0;"></div><div style="position:absolute;left:75px;top:431.4px;width:0px;height:0px;"></div><div style="position:absolute;left:235px;top:127.5px;width:49px;height:31px;background:#1c1c1e;border:1px solid #48484c;border-radius:5px;box-sizing:border-box;"></div><svg style="position:absolute;left:271px;top:141.0px" width="8" height="5" viewBox="0 0 8 5" fill="none"><path d="M0.7 0.7L4 4L7.3 0.7" stroke="#e6e6e6" stroke-width="1.3"/></svg><svg style="position:absolute;left:245px;top:134.0px" width="20" height="18" viewBox="0 0 20 18" fill="none"><path d="M1 14V3H9" stroke="#e6e6e6" stroke-width="1.2"/><path d="M6 11L15 2L17.5 4.5L8.5 13.5L5.5 14.5Z" stroke="#5ab0f0" stroke-width="1.2"/><rect x="1" y="15" width="18" height="3" fill="#ffffff"/></svg><div style="position:absolute;left:235px;top:233.5px;width:49px;height:29px;background:#131314;border:1px solid #2e2e30;border-radius:5px;box-sizing:border-box;"></div><svg style="position:absolute;left:271px;top:246.0px" width="8" height="5" viewBox="0 0 8 5" fill="none"><path d="M0.7 0.7L4 4L7.3 0.7" stroke="#555" stroke-width="1.3"/></svg><svg style="position:absolute;left:245px;top:239.0px" width="20" height="18" viewBox="0 0 20 18" fill="none"><path d="M1 5C3 3 5 7 7 5S11 3 13 5S17 7 19 5M1 9C3 7 5 11 7 9S11 7 13 9S17 11 19 9M1 13C3 11 5 15 7 13S11 11 13 13S17 15 19 13" stroke="#6a6a6a" stroke-width="1"/></svg><div style="position:absolute;left:235px;top:270.5px;width:49px;height:30px;background:#1c1c1e;border:1px solid #48484c;border-radius:5px;box-sizing:border-box;"></div><svg style="position:absolute;left:271px;top:283.5px" width="8" height="5" viewBox="0 0 8 5" fill="none"><path d="M0.7 0.7L4 4L7.3 0.7" stroke="#e6e6e6" stroke-width="1.3"/></svg><svg style="position:absolute;left:245px;top:276.5px" width="20" height="18" viewBox="0 0 20 18" fill="none"><rect x="0" y="0.3" width="18.5" height="3.1" fill="#4a9fe0"/><rect x="3.5" y="4.9" width="15" height="1.7" fill="#dcdcdc"/><rect x="0" y="9.3" width="18.5" height="3.1" fill="#4a9fe0"/><rect x="3.5" y="13.9" width="15" height="1.7" fill="#dcdcdc"/></svg><div style="position:absolute;left:235px;top:308px;width:49px;height:29.5px;background:#1c1c1e;border:1px solid #48484c;border-radius:5px;box-sizing:border-box;"></div><svg style="position:absolute;left:271px;top:320.75px" width="8" height="5" viewBox="0 0 8 5" fill="none"><path d="M0.7 0.7L4 4L7.3 0.7" stroke="#e6e6e6" stroke-width="1.3"/></svg><svg style="position:absolute;left:245px;top:313.75px" width="20" height="18" viewBox="0 0 20 18" fill="none"><path d="M0 1.3H18.5" stroke="#d8d8d8" stroke-width="1.4"/><path d="M0.5 6.3H18.5" stroke="#d8d8d8" stroke-width="1.4" stroke-dasharray="1.2 2.2"/><path d="M0 10.3H18.5" stroke="#d8d8d8" stroke-width="1.6" stroke-dasharray="2 1 4 1"/><path d="M0 14.8H18.5" stroke="#d8d8d8" stroke-width="1.6" stroke-dasharray="5 1.2"/></svg><div style="position:absolute;left:213.79999999999995px;top:345.5px;width:70px;height:24px;background:#1c1c1e;border:1px solid #48484c;border-radius:5px;box-sizing:border-box;"></div><svg style="position:absolute;left:270.79999999999995px;top:355.5px" width="8" height="5" viewBox="0 0 8 5" fill="none"><path d="M0.7 0.7L4 4L7.3 0.7" stroke="#e6e6e6" stroke-width="1.3"/></svg><div class="t" style="left:220.00px;top:351.65px;font-size:14px;color:#f0f0f0;letter-spacing:0.888px;">Flat</div><div style="position:absolute;left:215.70000000000005px;top:376.79999999999995px;width:68px;height:24.5px;background:#1c1c1e;border:1px solid #48484c;border-radius:5px;box-sizing:border-box;"></div><svg style="position:absolute;left:270.70000000000005px;top:387.04999999999995px" width="8" height="5" viewBox="0 0 8 5" fill="none"><path d="M0.7 0.7L4 4L7.3 0.7" stroke="#e6e6e6" stroke-width="1.3"/></svg><div class="t" style="left:222.00px;top:383.15px;font-size:14px;color:#f0f0f0;letter-spacing:0.473px;">Miter</div><div style="position:absolute;left:234.5999999999999px;top:408.29999999999995px;width:49px;height:30px;background:#1c1c1e;border:1px solid #48484c;border-radius:5px;box-sizing:border-box;"></div><svg style="position:absolute;left:270.5999999999999px;top:421.29999999999995px" width="8" height="5" viewBox="0 0 8 5" fill="none"><path d="M0.7 0.7L4 4L7.3 0.7" stroke="#e6e6e6" stroke-width="1.3"/></svg><svg style="position:absolute;left:244.5999999999999px;top:414.29999999999995px" width="20" height="18" viewBox="0 0 20 18" fill="none"><path d="M0 2.3H17.5M14.8 0L17.5 2.3L14.8 4.6" stroke="#5a9cc0" stroke-width="1.4"/><path d="M18 8.2H0.5M3.2 5.9L0.5 8.2L3.2 10.5" stroke="#5a9cc0" stroke-width="1.4"/><path d="M0.5 14.7H17.5M3.2 12.4L0.5 14.7L3.2 17M14.8 12.4L17.5 14.7L14.8 17" stroke="#5a9cc0" stroke-width="1.4"/></svg><div style="position:absolute;left:234.5999999999999px;top:445.70000000000005px;width:49px;height:30.3px;background:#1c1c1e;border:1px solid #48484c;border-radius:5px;box-sizing:border-box;"></div><svg style="position:absolute;left:270.5999999999999px;top:458.85px" width="8" height="5" viewBox="0 0 8 5" fill="none"><path d="M0.7 0.7L4 4L7.3 0.7" stroke="#e6e6e6" stroke-width="1.3"/></svg><svg style="position:absolute;left:244.5999999999999px;top:451.85px" width="20" height="18" viewBox="0 0 20 18" fill="none"><rect x="0" y="0.2" width="18" height="1.9" fill="#6a9fc8"/><rect x="0" y="3.6" width="18" height="2.7" fill="#5aa0d8"/><rect x="0" y="7.8" width="18" height="3.6" fill="#4a9fe0"/><rect x="0" y="12.6" width="18" height="4.8" fill="#4aa0e8"/></svg><div style="position:absolute;left:234.5999999999999px;top:483.4px;width:49px;height:30.5px;background:#1c1c1e;border:1px solid #48484c;border-radius:5px;box-sizing:border-box;"></div><svg style="position:absolute;left:270.5999999999999px;top:496.65px" width="8" height="5" viewBox="0 0 8 5" fill="none"><path d="M0.7 0.7L4 4L7.3 0.7" stroke="#e6e6e6" stroke-width="1.3"/></svg><svg style="position:absolute;left:244.5999999999999px;top:489.65px" width="20" height="18" viewBox="0 0 20 18" fill="none"><path d="M0 2.3H17.5M14.8 0L17.5 2.3L14.8 4.6" stroke="#5a9cc0" stroke-width="1.4"/><path d="M18 8.2H0.5M3.2 5.9L0.5 8.2L3.2 10.5" stroke="#5a9cc0" stroke-width="1.4"/><path d="M0.5 14.7H17.5M3.2 12.4L0.5 14.7L3.2 17M14.8 12.4L17.5 14.7L14.8 17" stroke="#5a9cc0" stroke-width="1.4"/></svg><div style="position:absolute;left:234.5999999999999px;top:520.5px;width:49px;height:30px;background:#1c1c1e;border:1px solid #48484c;border-radius:5px;box-sizing:border-box;"></div><svg style="position:absolute;left:270.5999999999999px;top:533.5px" width="8" height="5" viewBox="0 0 8 5" fill="none"><path d="M0.7 0.7L4 4L7.3 0.7" stroke="#e6e6e6" stroke-width="1.3"/></svg><svg style="position:absolute;left:244.5999999999999px;top:526.5px" width="20" height="18" viewBox="0 0 20 18" fill="none"><rect x="0" y="0.2" width="18" height="1.9" fill="#6a9fc8"/><rect x="0" y="3.6" width="18" height="2.7" fill="#5aa0d8"/><rect x="0" y="7.8" width="18" height="3.6" fill="#4a9fe0"/><rect x="0" y="12.6" width="18" height="4.8" fill="#4aa0e8"/></svg></div><div style="position:absolute;left:1361px;top:577px;width:2px;height:11px;background:#d0d0d0;"></div><div style="position:absolute;left:1361px;top:582.5px;width:48px;height:1.3px;background:#8a8a8c;"></div><div style="position:absolute;left:1418px;top:570px;width:91px;height:26.5px;background:#1c1c1e;border:1px solid #48484c;border-radius:5px;box-sizing:border-box;"></div><svg style="position:absolute;left:1495px;top:576px" width="8" height="14.5" viewBox="0 0 8 14.5" fill="none"><path d="M0.8 3.5L4 0.8L7.2 3.5" stroke="#e0e0e0" stroke-width="1.2"/><path d="M0.8 11.0L4 13.7L7.2 11.0" stroke="#e0e0e0" stroke-width="1.2"/></svg><div class="t" style="left:1424.50px;top:576.35px;font-size:14px;color:#f0f0f0;letter-spacing:-0.562px;">0 %</div><div style="position:absolute;left:1418px;top:604.5px;width:91px;height:25.5px;background:#1c1c1e;border:2px solid #f0f0f0;border-radius:5px;box-sizing:border-box;"></div><svg style="position:absolute;left:1495px;top:610.5px" width="8" height="13.5" viewBox="0 0 8 13.5" fill="none"><path d="M0.8 3.5L4 0.8L7.2 3.5" stroke="#e0e0e0" stroke-width="1.2"/><path d="M0.8 10.0L4 12.7L7.2 10.0" stroke="#e0e0e0" stroke-width="1.2"/></svg><div style="position:absolute;left:1425px;top:607.5px;width:35px;height:18px;background:#1f6fd0;"></div><div class="t" style="left:1425.50px;top:610.45px;font-size:14px;color:#ffffff;letter-spacing:-0.205px;">1,5 pt</div><svg style="position:absolute;left:1516px;top:411px;" width="11" height="8" viewBox="0 0 11 8" fill="none"><path d="M5.5 0.5L10.5 7.5H0.5Z" fill="#9a9a9a" stroke="#9a9a9a" stroke-linejoin="round"/></svg><div style="position:absolute;left:1517px;top:549px;width:9.5px;height:363px;background:#9b9b9b;border-radius:5px;"></div><svg style="position:absolute;left:1516px;top:931px;" width="11" height="8" viewBox="0 0 11 8" fill="none"><path d="M5.5 7.5L10.5 0.5H0.5Z" fill="#9a9a9a" stroke="#9a9a9a" stroke-linejoin="round"/></svg><svg style="position:absolute;left:1374px;top:617px;" width="16" height="22" viewBox="0 0 16 22" fill="none"><path d="M1 1V17.5L5 13.5L8 20.5L11 19L8 12.3H13.5Z" fill="#ffffff" stroke="#000" stroke-width="1"/></svg><div style="position:absolute;left:0px;top:1053px;width:1920px;height:27px;background:#151515;"></div><div style="position:absolute;left:0px;top:1052px;width:310px;height:1px;background:#262428;"></div><div style="position:absolute;left:0px;top:1078.5px;width:1920px;height:1.5px;background:#d8d8d8;"></div><div class="t" style="left:12.70px;top:1060.70px;font-size:13px;color:#e4e4e4;letter-spacing:-0.64px;">Slide 2 of 2</div><svg style="position:absolute;left:1440px;top:1058px;" width="19" height="18" viewBox="0 0 19 18" fill="none"><path d="M6.5 4L9.5 1L12.5 4" stroke="#e4e4e4" stroke-width="1.3"/><path d="M0 7.5H19M0 11.5H19M0 15.5H19" stroke="#e4e4e4" stroke-width="1.4"/></svg><div class="t" style="left:1460.50px;top:1060.80px;font-size:13px;color:#e4e4e4;letter-spacing:-0.99px;">Notes</div><div style="position:absolute;left:1512px;top:1053px;width:44px;height:25.5px;background:#262626;"></div><svg style="position:absolute;left:1525px;top:1060px;" width="17" height="14" viewBox="0 0 17 14" fill="none"><rect x="0.7" y="0.7" width="15.6" height="12.6" stroke="#e4e4e4" stroke-width="1.3"/><path d="M3.5 1V13.3M3.5 10H16" stroke="#e4e4e4" stroke-width="1.2"/><rect x="6" y="3" width="7.5" height="4.5" stroke="#e4e4e4" stroke-width="1.1"/></svg><svg style="position:absolute;left:1570px;top:1060px;" width="17" height="14" viewBox="0 0 17 14" fill="none"><rect x="0.7" y="0.7" width="6.8" height="5" stroke="#e4e4e4" stroke-width="1.3"/><rect x="9.5" y="0.7" width="6.8" height="5" stroke="#e4e4e4" stroke-width="1.3"/><rect x="0.7" y="8.3" width="6.8" height="5" stroke="#e4e4e4" stroke-width="1.3"/><rect x="9.5" y="8.3" width="6.8" height="5" stroke="#e4e4e4" stroke-width="1.3"/></svg><svg style="position:absolute;left:1615px;top:1059px;" width="16" height="15" viewBox="0 0 16 15" fill="none"><path d="M0.7 1.5H7L8 2.5L9 1.5H15.3V13H9L8 14L7 13H0.7Z" stroke="#e4e4e4" stroke-width="1.2"/><path d="M8 2.5V14M3 5H6M3 8H6M3 11H6M10 5H13M10 8H13M10 11H13" stroke="#e4e4e4" stroke-width="1.1"/></svg><svg style="position:absolute;left:1661px;top:1059px;" width="15" height="15" viewBox="0 0 15 15" fill="none"><path d="M0 1H15" stroke="#e4e4e4" stroke-width="1.4"/><rect x="1.5" y="1" width="12" height="8" stroke="#e4e4e4" stroke-width="1.2"/><path d="M5 4.5H10M7.5 9V14M4 14.3H11" stroke="#e4e4e4" stroke-width="1.2"/></svg><div style="position:absolute;left:1697px;top:1066.5px;width:9px;height:1.2px;background:#8a8a8a;"></div><div style="position:absolute;left:1712px;top:1066.5px;width:111px;height:1.5px;background:#b8b8b8;"></div><div style="position:absolute;left:1762px;top:1060.5px;width:6.5px;height:12.5px;background:#b8b8b8;border-radius:1.5px;"></div><svg style="position:absolute;left:1829px;top:1062px;" width="9" height="9" viewBox="0 0 9 9" fill="none"><path d="M4.5 0V9M0 4.5H9" stroke="#e4e4e4" stroke-width="1.2"/></svg><div class="t" style="left:1851.50px;top:1060.30px;font-size:13px;color:#e4e4e4;letter-spacing:-1.043px;">94 %</div><svg style="position:absolute;left:1898px;top:1058px;" width="17" height="17" viewBox="0 0 17 17" fill="none"><rect x="5" y="5" width="7" height="7" stroke="#e4e4e4" stroke-width="1.2"/><path d="M6.5 3L8.5 1L10.5 3M6.5 14L8.5 16L10.5 14M3 6.5L1 8.5L3 10.5M14 6.5L16 8.5L14 10.5" stroke="#e4e4e4" stroke-width="1.1"/></svg>
</body></html>
